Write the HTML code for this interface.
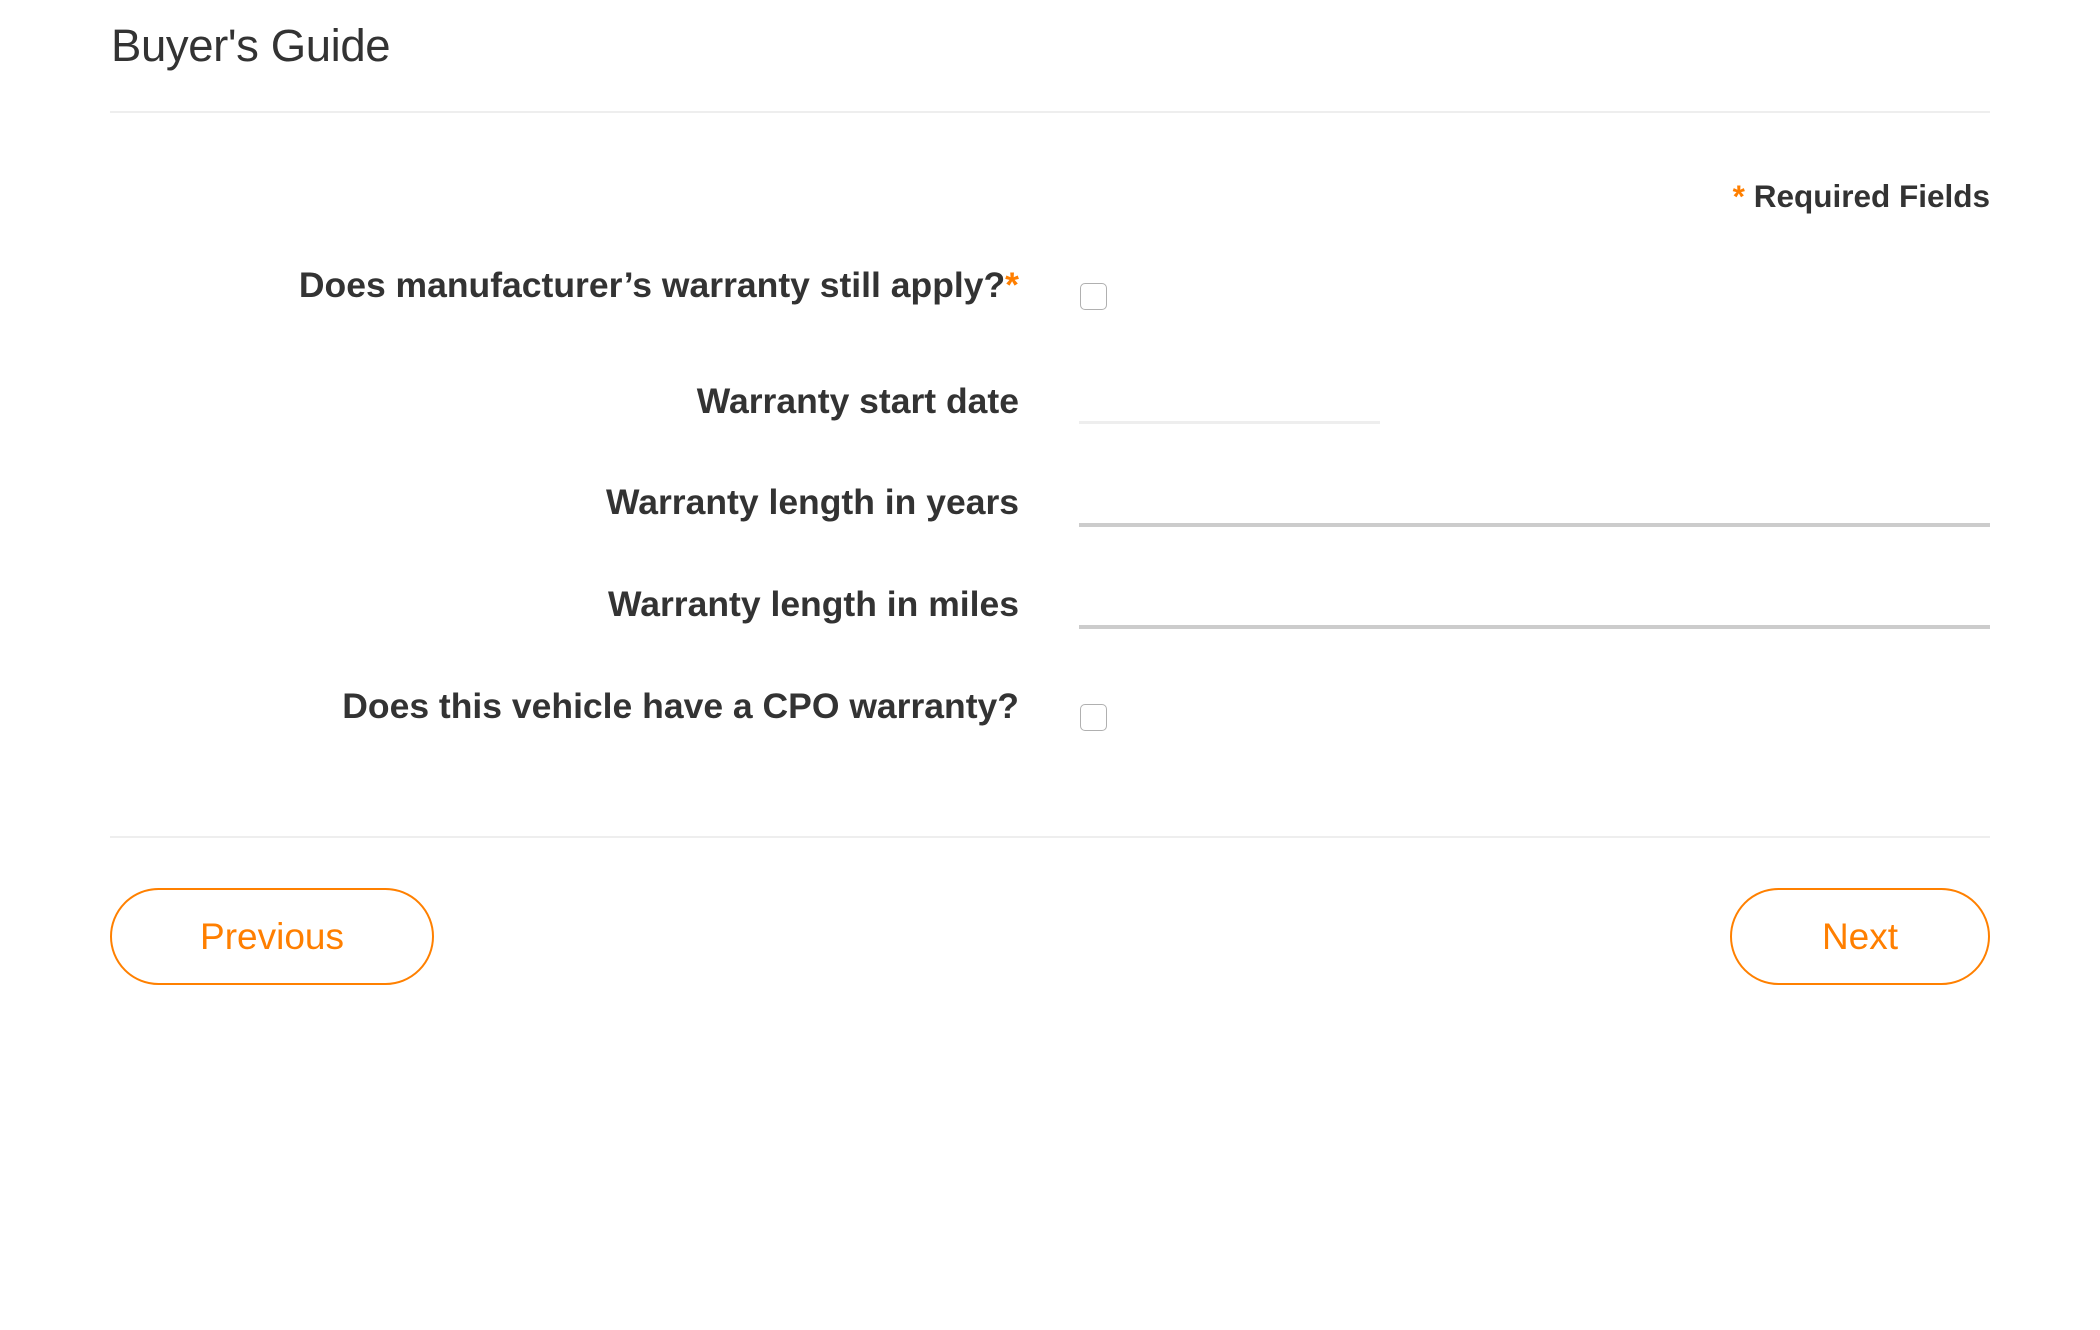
<!DOCTYPE html>
<html><head><meta charset="utf-8"><style>
body{margin:0;width:2100px;height:1330px;background:#fff;font-family:"Liberation Sans",Arial,sans-serif;position:relative;overflow:hidden;color:#333}
.a{position:absolute}
.t{left:111px;top:20px;font-size:45.5px;font-weight:300;color:#333;letter-spacing:-0.4px}
.hr{left:110px;width:1880px;height:2px;background:#eee}
.lbl{right:1081px;font-size:35.5px;font-weight:bold;color:#333;white-space:nowrap;line-height:40px}
.st{color:#ff7f00}
.cb{left:1080px;width:25px;height:25px;border:1.5px solid #b0b0b0;border-radius:5px;background:#fff}
.btn{border:2.5px solid #ff8000;border-radius:50px;top:888px;color:#ff7f00;font-size:37px;display:flex;align-items:center;justify-content:center;box-sizing:border-box;height:97px}
</style></head><body>
<div class="a t">Buyer's Guide</div>
<div class="a hr" style="top:111px"></div>
<div class="a" style="right:110px;top:176px;font-size:31.5px;font-weight:bold;line-height:40px"><span class="st">*</span> Required Fields</div>
<div class="a lbl" style="top:265px">Does manufacturer’s warranty still apply?<span class="st">*</span></div>
<div class="a cb" style="top:283px"></div>
<div class="a lbl" style="top:381px">Warranty start date</div>
<div class="a" style="left:1079px;top:421px;width:301px;height:3px;background:#eee"></div>
<div class="a lbl" style="top:482px">Warranty length in years</div>
<div class="a" style="left:1079px;top:523px;width:911px;height:4px;background:#ccc"></div>
<div class="a lbl" style="top:584px">Warranty length in miles</div>
<div class="a" style="left:1079px;top:625px;width:911px;height:4px;background:#ccc"></div>
<div class="a lbl" style="top:686px">Does this vehicle have a CPO warranty?</div>
<div class="a cb" style="top:704px"></div>
<div class="a hr" style="top:836px"></div>
<div class="a btn" style="left:110px;width:324px">Previous</div>
<div class="a btn" style="left:1730px;width:260px">Next</div>
</body></html>
